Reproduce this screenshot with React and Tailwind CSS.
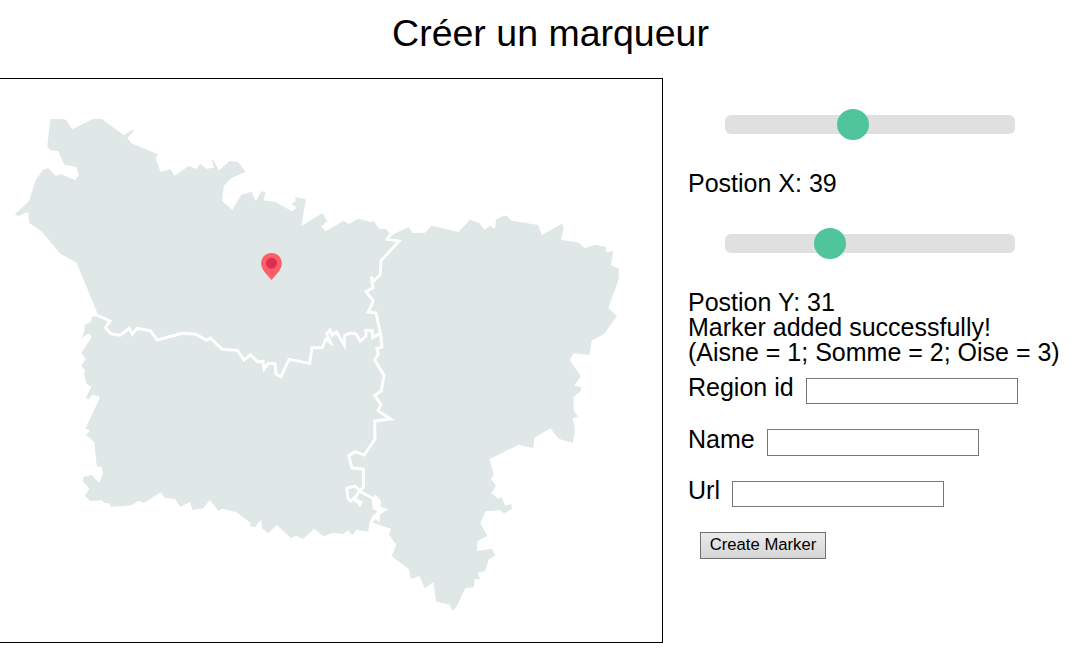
const LAND =
  "50.3,119 63.3,119 66,120 72.3,129.3 92.7,119 101.7,119 124,135.3 132.3,129.7 134,130.7 127.3,138 131,143 157.7,154.3 155.7,159 160.7,172 170.3,169.3 174.7,175.7 188.7,166 196,169 200.3,163.7 206.3,168.7 214,167.7 212,160 213.3,160 219,170.3 229.7,161 238,162 245.7,172 231.7,177.7 224,185.7 222,201 232.3,209.7 241.3,194.7 251.7,191.7 255.7,201.3 261.3,191.3 265.7,192.3 263.3,200.3 276,202.3 292,211.3 297,207.7 291.7,203.7 295.7,201.3 295,197 306,199.3 301.3,226 322.3,213 327,221 321.3,227 325.7,231.3 343.7,220.7 348.7,224 358.3,218.7 371.7,222.3 373.7,220.7 379,229 386,229 389.3,232.7 391.5,236 395,233.3 408.7,227.3 412.7,233 425,232.7 431.7,225.7 458.7,232 469.7,219.7 479.3,223 484.3,230 490,225.7 495,229 496,219.7 503.7,215.7 506.7,215.7 511.7,220.7 538.3,225 541.7,235 562,223.7 563.7,227.7 560.7,239.7 578.7,242.7 584.3,248 596,244.7 605.7,247 606.3,252 613.3,251.3 611,265.3 619,268.7 618.7,279.3 608.3,308.3 617,316 604,334 591.7,340.7 589.3,355 574,353.3 569.7,360 580.7,376.3 574.3,386 581,387 581,391 573.5,397 573.7,410.7 578.3,416.7 572.7,418.3 575,430 572.7,443 558.7,438.7 550.3,428.3 534.3,437.7 533.3,448.3 519,444.7 489.7,459 493.7,474.3 491,479.3 496,485.7 491.3,493 498.7,499 501.7,496.7 505,505.7 511.7,504.3 511.7,509 504,513.7 499.7,510 485.7,511.3 480.3,523 487.3,535.7 477.3,541.3 477,551 491.7,548.7 495.7,555.3 489,559 485,571 477.7,573 480,579 474.7,579 474,587.3 465.3,588 456.3,607.3 452.7,610.7 449.7,604.7 436.3,601.7 433.3,582 424.7,588.3 419.7,576 411,579 409,569.3 391.7,556.3 396.3,544.7 388.7,534.3 391,528.7 372.7,522.7 368.7,531.7 356.3,530 352.3,535.3 348.3,530.3 342.7,534.3 333.3,532.7 323.3,536.3 314.3,528.7 303,539 296,535.7 290.7,538 277,525 268,533.3 262,528.3 261.3,519.3 255,527.3 250,526 250.7,522.7 240.3,515.3 236.7,512.3 222,508.7 218.3,510.7 209.7,500 203.3,508.3 192.3,510 190.3,502 180,506.7 175,499 165,498 160.7,492.3 144.3,502.7 138.3,500.7 131.7,505.3 111,506.7 109.3,503.3 104.3,503 102.3,500.3 90,501 85,495.7 89.3,488.7 83,481.7 83.3,477 91.7,475 99.3,483.3 103,473.3 101.7,467 96.7,466.3 94.3,442.3 86.3,434.7 90,430 85.3,428.7 99.7,398.3 98.3,396 92,394.7 89.3,399.3 85.7,398 91.3,387 86.3,383.3 84,373.3 85.7,370.7 81.3,365.7 85.7,359 81.3,352.7 91.7,337.3 89.3,333.3 81.3,338 84.3,331.7 84.7,325 91,322 91.7,316.7 98.5,316 76.7,262.7 60.3,253.7 42,231.7 29.3,223 28,211.7 19,216 14.7,214.3 29,201.3 35.7,179.7 43.3,169.7 48.3,168 55.7,176 61,174 75.3,180.3 78.7,174.7 76.3,166.7 64.3,164.7 58,151 49.7,150 47.3,146.3";

const SOMME_OISE =
  "95,314.5 99,316 110,321 105.3,327.7 111.3,334 120,335.3 129.3,328.3 132.3,334.3 137,328.3 150.3,330.7 157.3,340 182,333.3 195.3,334 206.7,340.3 210.3,338 222.3,349.3 237.3,350.3 244,360 250.3,354.7 257.7,362 263,361.3 264,369 268.3,363.3 275,363.7 276,374 281,376.7 289,359.3 309.7,363.3 312,347.7 322.3,347.7 325.7,339.3 330.7,342.7 326.7,333.7 330,330 332.3,335.3 336.3,331.7 344.3,345 344.7,335.7 350,333 355.7,333.7 360.3,341 366,336 365.7,330.3 372.3,330.7 372.7,337.7 380.7,332.7";

const AISNE =
  "393,231 391.3,233.3 387.3,239.3 399,241.3 381,260.7 380.3,274.7 373.3,281.3 371.3,276.7 373,287.7 366,291.7 373.3,300.7 368.3,312 376,313 380.7,335 382,347 376.7,348.7 378.3,354 374.7,360 384,375.3 381.3,391 374.7,395.3 381,404.7 378,410.7 390.7,419 374.7,421 375,439 364.3,455 355,451.7 348.7,455.7 352,468 363.3,469 363.7,486.7 360,490.7 355.3,486 346.7,488 348,498.7 351,501 357.3,494.7 359,491 373,498.3";

function RegionMap() {
  return (
    <svg className="block h-[563px] w-[662px]" viewBox="0 79 662 563" aria-label="Carte">
      <polygon points={LAND} fill="#dfe8e6" />
      <g fill="none" stroke="#fff" strokeWidth="2.9">
        <polyline points={SOMME_OISE} />
        <polyline points={AISNE} />
      </g>
      <g fill="#fff">
        <polygon points="352.7,500 357,496 357,499 363.3,501.3 360,507.3 356.7,503.3" />
        <polygon points="373.3,497.3 375.7,494.7 381,501 380.3,506.7 388.7,509.3 380,514.3 379.3,522.3 375,519 372.5,523 370,532.5 368.3,532 369.3,523.3 372,516.7 377.3,511.7 372.7,508.7 371.7,500" />
      </g>
      <path d="M271.5 253C265.6 253 261.2 257.6 261.2 263.2C261.2 269 266 273.5 271.5 280C277 273.5 281.8 269 281.8 263.2C281.8 257.6 277.4 253 271.5 253Z" fill="#ff5c6c" />
      <circle cx="271.5" cy="263.2" r="5.5" fill="#da2f4e" />
    </svg>
  );
}

function Slider({ value, thumb }) {
  return (
    <div
      role="slider"
      aria-valuenow={value}
      className="relative ml-[37px] h-[19px] w-[290px] rounded-[6px] bg-[#e0e0e0]"
    >
      <div
        className="absolute -top-1.5 h-[31px] w-8 rounded-[50%] bg-[#50c49b]"
        style={{ left: thumb }}
      />
    </div>
  );
}

function Field({ label, className, labelClass = "-mt-[3px]" }) {
  return (
    <label className={`flex ${className}`}>
      <span className={labelClass}>{label}</span>
      <input className="ml-3 w-[212px] border border-[#767676] bg-white px-1 text-base outline-none" />
    </label>
  );
}

export default function App() {
  return (
    <div className="h-[657px] w-[1081px] overflow-hidden bg-white font-['Liberation_Sans',Arial,sans-serif] text-[25px] leading-[25px] text-black">
      <h1 className="h-[78px] pt-[14px] pl-5 text-center text-[37.5px] leading-[38px]">Créer un marqueur</h1>
      <main className="flex">
        <section className="h-[565px] w-[663px] shrink-0 border-y border-r border-black">
          <RegionMap />
        </section>
        <section className="ml-[25px] flex flex-1 flex-col pt-[37px] whitespace-nowrap">
          <Slider value={39} thumb={112} />
          <p className="mt-[37px]">Postion X: 39</p>
          <div className="mt-[38px]">
            <Slider value={31} thumb={89} />
          </div>
          <p className="mt-[37px]">Postion Y: 31</p>
          <p>Marker added successfully!</p>
          <p>(Aisne = 1; Somme = 2; Oise = 3)</p>
          <Field label="Region id" className="mt-[13px] h-[26px]" />
          <Field label="Name" className="mt-[25px] h-[27px]" labelClass="-mt-0.5" />
          <Field label="Url" className="mt-[25px] h-[26px]" />
          <button className="mt-[25px] ml-3 flex h-[27px] w-[126px] justify-center border border-[#707070] bg-linear-to-b from-[#ebebeb] to-[#d6d6d6] text-[16.67px] leading-[23px]">
            Create Marker
          </button>
        </section>
      </main>
    </div>
  );
}
